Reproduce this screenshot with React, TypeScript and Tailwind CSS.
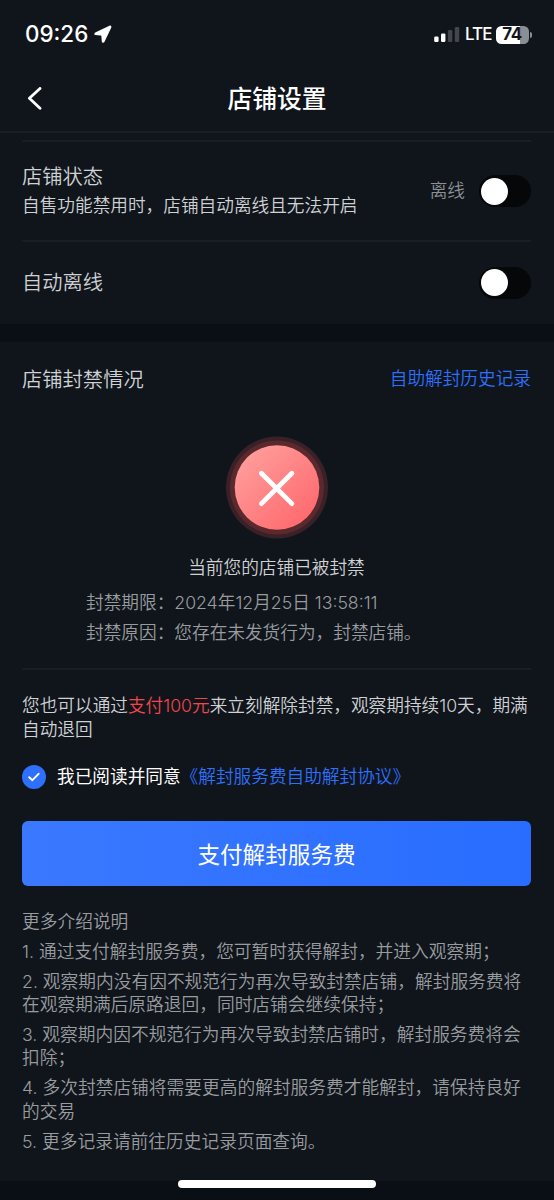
import type { ReactNode } from "react";

const NOTES = [
  "1. 通过支付解封服务费，您可暂时获得解封，并进入观察期；",
  "2. 观察期内没有因不规范行为再次导致封禁店铺，解封服务费将在观察期满后原路退回，同时店铺会继续保持；",
  "3. 观察期内因不规范行为再次导致封禁店铺时，解封服务费将会扣除；",
  "4. 多次封禁店铺将需要更高的解封服务费才能解封，请保持良好的交易",
  "5. 更多记录请前往历史记录页面查询。",
];

function StatusBar() {
  return (
    <div className="flex h-[66px] items-center justify-between pl-[25px] pr-[22px] pt-[3px] text-white">
      <div className="flex items-center gap-[6px]">
        <span className="w-[63px] whitespace-nowrap text-[22.4px] font-medium leading-none">
          09:26
        </span>
        <svg className="-mt-px" width="18" height="18" viewBox="0 0 18 18" aria-hidden>
          <path
            d="M15.4.7 1.2 7.4C-.2 8.1.1 10 1.4 10.1l5.1.4c.7 0 .9.3.9.9l.4 5.1c.1 1.4 2 1.7 2.6.5L17.3 2.6c.5-1.2-.6-2.4-1.9-1.9Z"
            fill="currentColor"
          />
        </svg>
      </div>
      <div className="flex items-center">
        <svg width="26" height="17" viewBox="0 0 26 17" aria-hidden>
          <rect x="0.2" y="10.5" width="4.4" height="5.5" rx="1.2" fill="#fff" />
          <rect x="7" y="7.5" width="4.4" height="8.5" rx="1.2" fill="#fff" />
          <rect x="13.9" y="4.1" width="4.4" height="11.9" rx="1.2" fill="#43474d" />
          <rect x="20.8" y="1" width="4.4" height="15" rx="1.2" fill="#43474d" />
        </svg>
        <span className="ml-[5px] w-[27px] whitespace-nowrap text-[17px] font-medium leading-none tracking-[-0.9px]">
          LTE
        </span>
        <div className="ml-[4px] flex h-[18px] w-[33px] items-center justify-center rounded-[5.5px] bg-[linear-gradient(90deg,#fff_74%,#8b8e92_74%)] pr-px text-[17px] font-bold leading-none tracking-[-0.5px] text-[#10151c]">
          74
        </div>
        <span className="ml-[1px] h-[6px] w-[2px] rounded-r-full bg-[#8b8e92]" />
      </div>
    </div>
  );
}

function Toggle() {
  return (
    <span className="flex h-[32px] w-[52px] items-center rounded-full bg-[#050709] pl-[2px]">
      <span className="size-[27px] rounded-full bg-white" />
    </span>
  );
}

function Reason({ label, children }: { label: string; children: ReactNode }) {
  return (
    <p className="h-[30px] leading-[30px] text-[#999c9f]">
      {label}：{children}
    </p>
  );
}

/** 封禁状态图标：红色渐变圆 + 两层光晕 */
function BannedIcon() {
  return (
    <svg width="104" height="104" viewBox="0 0 104 104" aria-hidden>
      <defs>
        <linearGradient id="banned" x1="0.1" y1="0.1" x2="0.85" y2="0.9">
          <stop offset="0" stopColor="#ff9e9c" />
          <stop offset="1" stopColor="#ff6a6e" />
        </linearGradient>
      </defs>
      <circle cx="52" cy="51.5" r="51" fill="#3a2127" />
      <circle cx="52" cy="51.5" r="47" fill="#59292e" />
      <circle cx="52" cy="51.5" r="42.3" fill="url(#banned)" />
      <path
        d="M36.4 37.3 66.9 67.6M66.9 37.3 36.4 67.6"
        stroke="#fff"
        strokeWidth="4.8"
        strokeLinecap="round"
      />
    </svg>
  );
}

export default function App() {
  return (
    <div className="flex h-[1200px] w-[554px] flex-col overflow-hidden bg-[#10151c] font-['Inter','Noto_Sans_CJK_SC',sans-serif] text-[17.67px] font-[350] text-[#cfd1d3]">
      <StatusBar />
      <header className="grid h-[67px] grid-cols-[1fr_auto_1fr] items-center border-b-2 border-[#191e25] text-white">
        <svg className="ml-[27px]" width="16" height="24" viewBox="0 0 16 24" fill="none" aria-hidden>
          <path
            d="M13 1.4 2.4 11.3 13 21.2"
            stroke="currentColor"
            strokeWidth="2.8"
            strokeLinecap="round"
            strokeLinejoin="round"
          />
        </svg>
        <h1 className="pt-[2px] text-[24.8px] font-medium leading-none">店铺设置</h1>
      </header>

      <section className="h-[191px] pl-[22px] pr-[23px] pt-[7px]">
        <div className="flex h-[102px] items-center justify-between border-y-2 border-[#191e25]">
          <div>
            <h2 className="text-[20.3px] leading-[30px]">店铺状态</h2>
            <p className="leading-[28px]">自售功能禁用时，店铺自动离线且无法开启</p>
          </div>
          <div className="flex items-center gap-[14px]">
            <span className="pt-px text-[#8d9093]">离线</span>
            <Toggle />
          </div>
        </div>
        <div className="flex h-[81px] items-center justify-between">
          <h2 className="pt-[2px] text-[20.3px]">自动离线</h2>
          <Toggle />
        </div>
      </section>

      <div className="h-[18px] shrink-0 bg-[#0a0e15]" />

      <section className="flex h-[839px] shrink-0 flex-col pl-[22px] pr-[23px]">
        <div className="flex h-[74px] items-center justify-between">
          <h2 className="pt-[2px] text-[20.3px]">店铺封禁情况</h2>
          <a className="pt-px text-[#2e70fc]">自助解封历史记录</a>
        </div>
        <div className="flex flex-col items-center pt-[20px]">
          <BannedIcon />
          <p className="mt-[12px] h-[36px] leading-[32px]">当前您的店铺已被封禁</p>
        </div>
        <div className="h-[82px] border-b-2 border-[#191e25] pl-[64px]">
          <Reason label="封禁期限">2024年12月25日 13:58:11</Reason>
          <Reason label="封禁原因">您存在未发货行为，封禁店铺。</Reason>
        </div>

        <p className="mt-[24px] leading-[24px]">
          您也可以通过<span className="text-[#f2464b]">支付100元</span>
          来立刻解除封禁，观察期持续10天，期满自动退回
        </p>

        <label className="mt-[23px] flex h-[24px] items-center text-white">
          <span className="mr-[11px] flex size-[24px] items-center justify-center rounded-full bg-[#2e70fc]">
            <svg width="12" height="10" viewBox="0 0 12 10" fill="none" aria-hidden>
              <path
                d="m1.2 5.2 3.2 3 6.2-6.4"
                stroke="#fff"
                strokeWidth="1.9"
                strokeLinecap="round"
                strokeLinejoin="round"
              />
            </svg>
          </span>
          <span className="font-normal">我已阅读并同意</span>
          <a className="text-[#2e70fc]">《解封服务费自助解封协议》</a>
        </label>

        <button className="mt-[32px] h-[65px] shrink-0 rounded-[6px] bg-linear-to-r from-[#3a78ff] to-[#286dff] pt-[2px] text-[22.6px] font-normal text-white">
          支付解封服务费
        </button>

        <div className="mt-[24px] flex flex-col gap-[6.8px] text-[17.73px] leading-[23.2px] text-[#999c9f]">
          <p>更多介绍说明</p>
          {NOTES.map((note) => (
            <p key={note}>{note}</p>
          ))}
        </div>
      </section>

      <footer className="flex grow justify-center bg-[#0a0e15]">
        <span className="-mt-[1px] h-[8px] w-[198px] rounded-full bg-white" />
      </footer>
    </div>
  );
}
